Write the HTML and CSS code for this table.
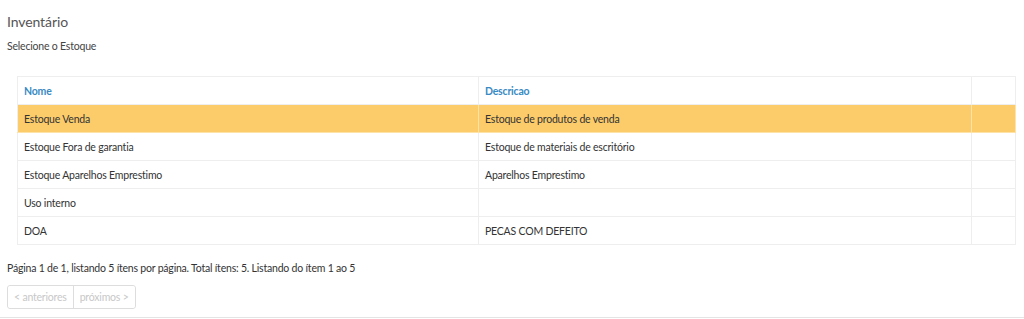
FILE: index.html
```html
<!DOCTYPE html>
<html lang="pt">
<head>
<meta charset="utf-8">
<title>Inventário</title>
<link rel="stylesheet" href="styles.css">
</head>
<body>
<div class="page">
  <h1 class="title">Inventário</h1>
  <p class="subtitle">Selecione o Estoque</p>

  <div class="table-wrap">
    <table class="grid">
      <thead>
        <tr><th class="c-nome">Nome</th><th class="c-desc">Descricao</th><th class="c-act"></th></tr>
      </thead>
      <tbody>
        <tr class="selected"><td>Estoque Venda</td><td>Estoque de produtos de venda</td><td></td></tr>
        <tr><td>Estoque Fora de garantia</td><td>Estoque de materiais de escritório</td><td></td></tr>
        <tr><td>Estoque Aparelhos Emprestimo</td><td>Aparelhos Emprestimo</td><td></td></tr>
        <tr><td>Uso interno</td><td></td><td></td></tr>
        <tr><td>DOA</td><td>PECAS COM DEFEITO</td><td></td></tr>
      </tbody>
    </table>
  </div>

  <p class="summary">Página 1 de 1, listando 5 ítens por página. Total ítens: 5. Listando do ítem 1 ao 5</p>

  <div class="pager">
    <button class="pager-btn" disabled>&lt; anteriores</button>
    <button class="pager-btn" disabled>próximos &gt;</button>
  </div>
</div>
<div class="footer-line"></div>
</body>
</html>
```

FILE: styles.css
```css
html, body {
  margin: 0;
  padding: 0;
  background: #fff;
}

body {
  font-family: "Source Sans Pro", "Lato", "Noto Sans", sans-serif;
  color: #333;
  font-size: 11px;
  letter-spacing: -0.2px;
}

.page {
  padding: 0 7px;
  height: 317px;
  box-sizing: border-box;
  overflow: hidden;
}

.title {
  margin: 0;
  padding-top: 13px;
  font-size: 14px;
  font-weight: 400;
  line-height: 18px;
  color: #555;
  letter-spacing: -0.1px;
}

.subtitle {
  margin: 8px 0 0;
  font-size: 10.5px;
  line-height: 14px;
  color: #444;
}

.table-wrap {
  margin: 23px 1px 0 10px;
}

.grid {
  width: 100%;
  border-collapse: collapse;
  border: 1px solid #eee;
  table-layout: fixed;
}

.grid th,
.grid td {
  height: 28px;
  padding: 0 6px;
  box-sizing: border-box;
  text-align: left;
  vertical-align: middle;
  border-right: 1px solid #eee;
  border-bottom: 1px solid #eee;
  font-size: 10.5px;
  color: #333;
}

.grid th {
  font-weight: 700;
  color: #3a8ac4;
}

.c-nome { width: 461px; }
.c-desc { width: 493px; }
.c-act { width: auto; }

.grid tr.selected td {
  background: #fccc6b;
  border-bottom-color: #fde3a8;
  border-right-color: #fde3a8;
}

.summary {
  margin: 16px 0 0;
  font-size: 10.5px;
  line-height: 14px;
  color: #333;
}

.pager {
  display: flex;
  margin-top: 10px;
  width: max-content;
  border: 1px solid #ddd;
  border-radius: 3px;
}

.pager-btn {
  font-family: inherit;
  font-size: 10.5px;
  letter-spacing: -0.2px;
  height: 22px;
  padding: 0 6px;
  background: #fff;
  color: #c8c8c8;
  border: 0;
  margin: 0;
  border-radius: 3px;
}

.pager-btn + .pager-btn {
  border-left: 1px solid #ddd;
  border-radius: 0 3px 3px 0;
}

.footer-line {
  height: 1px;
  background: #e4e4e4;
}
```
